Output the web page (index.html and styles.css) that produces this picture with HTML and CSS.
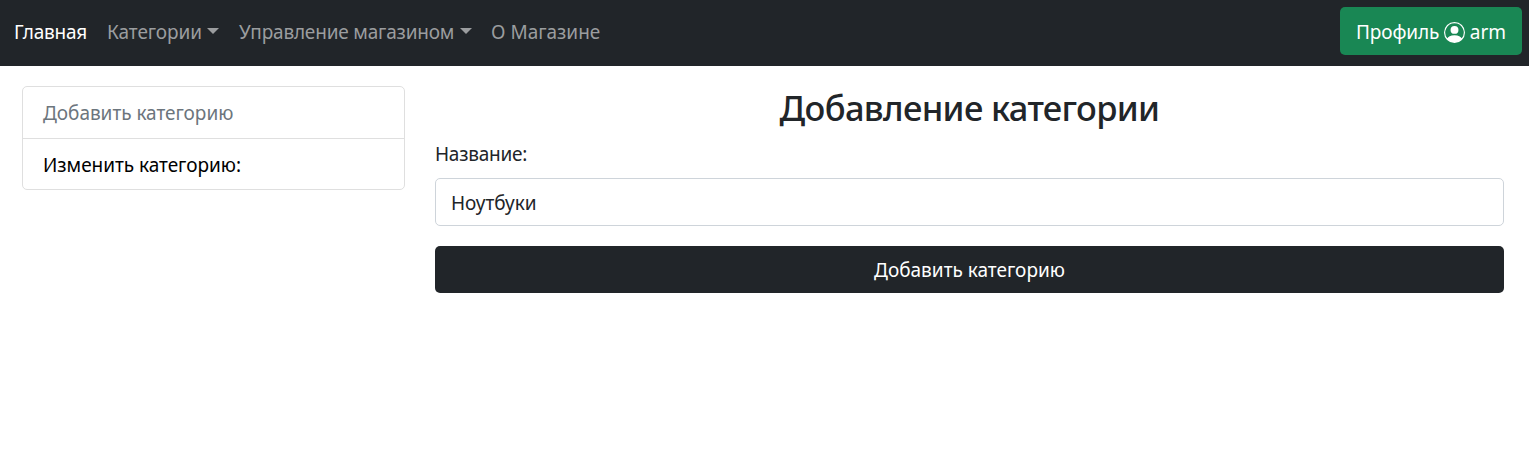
FILE: index.html
```
<!DOCTYPE html>
<html lang="ru">
<head>
<meta charset="utf-8">
<title>Добавление категории</title>
<link rel="stylesheet" href="styles.css">
</head>
<body>
<nav class="navbar">
  <div class="nav-links">
    <a class="nav-link active w-home"><span>Главная</span></a>
    <a class="nav-link w-cats"><span>Категории</span><i class="caret"></i></a>
    <a class="nav-link w-manage"><span>Управление магазином</span><i class="caret"></i></a>
    <a class="nav-link w-about"><span>О Магазине</span></a>
  </div>
  <a class="profile"><span class="profile-label">Профиль</span><svg class="person" viewBox="0 0 16 16" fill="currentColor"><path d="M11 6a3 3 0 1 1-6 0 3 3 0 0 1 6 0z"/><path fill-rule="evenodd" d="M0 8a8 8 0 1 1 16 0A8 8 0 0 1 0 8zm8-7a7 7 0 0 0-5.468 11.37C3.242 11.226 4.805 10 8 10s4.757 1.225 5.468 2.37A7 7 0 0 0 8 1z"/></svg><span class="profile-name">arm</span></a>
</nav>
<main class="layout">
  <aside class="list-group">
    <a class="list-item muted"><span>Добавить категорию</span></a>
    <a class="list-item"><span>Изменить категорию:</span></a>
  </aside>
  <form class="form">
    <h1 class="title"><span>Добавление категории</span></h1>
    <label class="label" for="name"><span>Название:</span></label>
    <input class="input" id="name" type="text" value="Ноутбуки">
    <button class="submit" type="button"><span>Добавить категорию</span></button>
  </form>
</main>
</body>
</html>
```
FILE: styles.css
```
* { box-sizing: border-box; }
body {
  margin: 0;
  width: 1529px;
  background: #fff;
  color: #212529;
  font: 400 19px/30px "Noto Sans", "Open Sans", sans-serif;
}
.navbar {
  display: flex;
  justify-content: space-between;
  align-items: flex-start;
  height: 66px;
  padding: 7px 7px 0 14px;
  background: #212529;
}
.nav-links { display: flex; gap: 20px; padding-top: 10px; }
.nav-link {
  display: flex;
  justify-content: space-between;
  color: #9b9d9f;
  white-space: nowrap;
}
.active { color: #fff; }
.w-home { width: 73px; letter-spacing: -0.25px; }
.w-cats { width: 112px; letter-spacing: -0.1px; }
.w-manage { width: 233px; letter-spacing: -0.19px; }
.w-about { width: 112px; }
.w-about span { margin-left: -1px; }
.caret {
  width: 12px;
  height: 6px;
  margin-top: 11px;
  border: solid transparent;
  border-width: 6px 6px 0;
  border-top-color: currentColor;
}
.profile {
  display: flex;
  align-items: center;
  width: 182px;
  height: 48px;
  padding: 2px 16px 0;
  border-radius: 5px;
  background: #198754;
  color: #fff;
}
.profile-label { width: 89px; letter-spacing: -0.1px; }
.person { width: 21px; height: 21px; margin-right: 5px; flex: none; }
.layout { display: flex; gap: 30px; padding: 20px 25px 0 22px; }
.list-group {
  width: 383px;
  height: 104px;
  border: 1px solid #dfdfdf;
  border-radius: 5px;
}
.list-item {
  display: block;
  height: 51px;
  padding: 11px 20px 0;
  color: #000;
  letter-spacing: -0.03px;
}
.muted { height: 52px; border-bottom: 1px solid #dfdfdf; color: #6c757d; }
.form { display: flex; flex-direction: column; width: 1069px; }
.title {
  margin: 0 0 8px;
  padding-bottom: 2px;
  font-size: 34.5px;
  font-weight: 500;
  line-height: 43px;
  letter-spacing: -0.65px;
  text-align: center;
}
.label { margin-bottom: 9px; letter-spacing: -0.25px; }
.input {
  height: 48px;
  margin-bottom: 20px;
  padding: 1px 15px 0;
  border: 1px solid #ced4da;
  border-radius: 5px;
  color: inherit;
  background: #fff;
  font: inherit;
}
.submit {
  height: 47px;
  padding: 0;
  border: 0;
  border-radius: 5px;
  background: #212529;
  color: #fff;
  font: inherit;
}
```
